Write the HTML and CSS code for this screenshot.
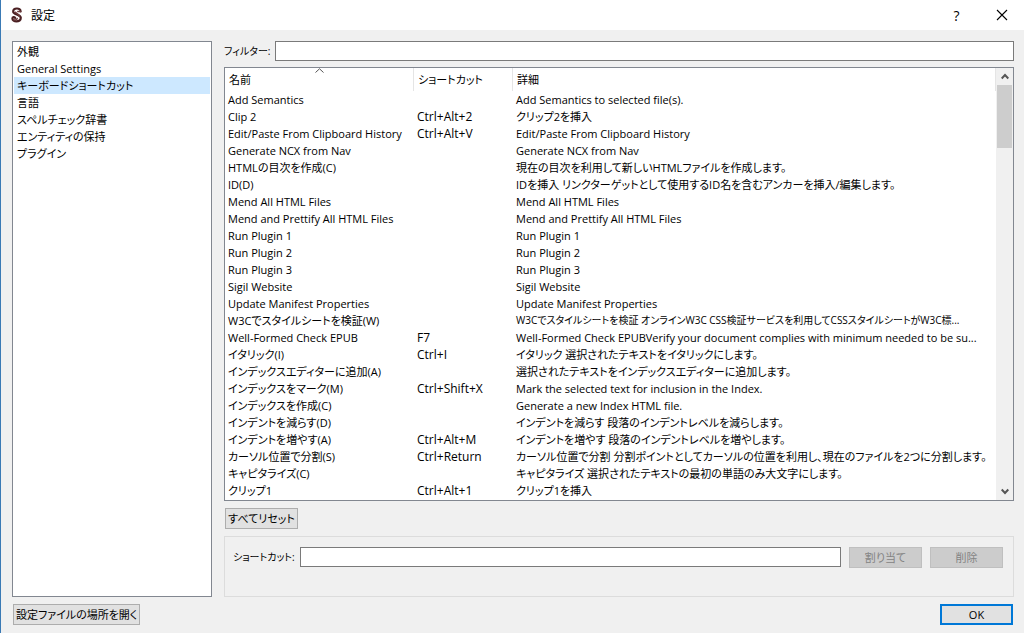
FILE: index.html
```html
<!DOCTYPE html>
<html lang="ja">
<head>
<meta charset="utf-8">
<title>設定</title>
<link rel="stylesheet" href="styles.css">
</head>
<body>
<div class="dialog">
  <header class="titlebar">
    <svg class="logo" width="12" height="16" viewBox="0 0 12 16" fill="none" stroke-linecap="round" aria-hidden="true">
      <path d="M9.6 4.4C9.6 2.2 7.8 1.4 5.8 1.5 3.4 1.6 2 2.8 2.2 4.8 2.5 7.6 9.6 7.2 9.8 10.8 9.9 13.2 7.8 14.4 5.4 14.4 3.2 14.4 1.4 13.4 1.4 11.6 1.4 10 3.6 9.6 4.2 11" stroke="#4a1f22" stroke-width="2.2"/>
      <path d="M4.4 5.2C5.6 6.8 8 7.2 8.4 9.4M6.8 4.4 9.6 4.6M2.6 12.6C4 13.4 6 13 6.2 11.4" stroke="#6d3a3c" stroke-width="1.5"/>
    </svg>
    <h1 class="title">設定</h1>
    <button class="winbtn" type="button" aria-label="ヘルプ">?</button>
    <button class="winbtn" type="button" aria-label="閉じる">
      <svg width="12" height="12" viewBox="0 0 12 12" fill="none" stroke="#000" stroke-width="1.1"><path d="M1 1 11 11M11 1 1 11"/></svg>
    </button>
  </header>
  <main class="content">
    <nav class="sidebar">
      <button class="item" type="button">外観</button>
      <button class="item" type="button">General Settings</button>
      <button class="item selected" type="button" aria-current="page">キーボードショートカット</button>
      <button class="item" type="button">言語</button>
      <button class="item" type="button">スペルチェック辞書</button>
      <button class="item" type="button">エンティティの保持</button>
      <button class="item" type="button">プラグイン</button>
    </nav>
    <section class="panel">
      <div class="filter">
        <label for="filter">フィルター:</label>
        <input class="textbox" id="filter" type="text">
      </div>
      <div class="list">
        <table class="shortcuts">
          <colgroup><col class="col-name"><col class="col-key"><col></colgroup>
          <thead>
            <tr>
              <th>名前<svg class="sort" width="9" height="5" viewBox="0 0 9 5" fill="none" stroke="#555"><path d="M.5 4.5 4.5.8 8.5 4.5"/></svg></th>
              <th>ショートカット</th>
              <th>詳細</th>
            </tr>
          </thead>
          <tbody>
            <tr><td>Add Semantics</td><td></td><td>Add Semantics to selected file(s).</td></tr>
            <tr><td>Clip 2</td><td>Ctrl+Alt+2</td><td>クリップ2を挿入</td></tr>
            <tr><td>Edit/Paste From Clipboard History</td><td>Ctrl+Alt+V</td><td>Edit/Paste From Clipboard History</td></tr>
            <tr><td>Generate NCX from Nav</td><td></td><td>Generate NCX from Nav</td></tr>
            <tr><td>HTMLの目次を作成(C)</td><td></td><td>現在の目次を利用して新しいHTMLファイルを作成します。</td></tr>
            <tr><td>ID(D)</td><td></td><td>IDを挿入 リンクターゲットとして使用するID名を含むアンカーを挿入/編集します。</td></tr>
            <tr><td>Mend All HTML Files</td><td></td><td>Mend All HTML Files</td></tr>
            <tr><td>Mend and Prettify All HTML Files</td><td></td><td>Mend and Prettify All HTML Files</td></tr>
            <tr><td>Run Plugin 1</td><td></td><td>Run Plugin 1</td></tr>
            <tr><td>Run Plugin 2</td><td></td><td>Run Plugin 2</td></tr>
            <tr><td>Run Plugin 3</td><td></td><td>Run Plugin 3</td></tr>
            <tr><td>Sigil Website</td><td></td><td>Sigil Website</td></tr>
            <tr><td>Update Manifest Properties</td><td></td><td>Update Manifest Properties</td></tr>
            <tr><td>W3Cでスタイルシートを検証(W)</td><td></td><td class="long">W3Cでスタイルシートを検証 オンラインW3C CSS検証サービスを利用してCSSスタイルシートがW3C標...</td></tr>
            <tr><td>Well-Formed Check EPUB</td><td>F7</td><td>Well-Formed Check EPUBVerify your document complies with minimum needed to be su...</td></tr>
            <tr><td>イタリック(I)</td><td>Ctrl+I</td><td>イタリック 選択されたテキストをイタリックにします。</td></tr>
            <tr><td>インデックスエディターに追加(A)</td><td></td><td>選択されたテキストをインデックスエディターに追加します。</td></tr>
            <tr><td>インデックスをマーク(M)</td><td>Ctrl+Shift+X</td><td>Mark the selected text for inclusion in the Index.</td></tr>
            <tr><td>インデックスを作成(C)</td><td></td><td>Generate a new Index HTML file.</td></tr>
            <tr><td>インデントを減らす(D)</td><td></td><td>インデントを減らす 段落のインデントレベルを減らします。</td></tr>
            <tr><td>インデントを増やす(A)</td><td>Ctrl+Alt+M</td><td>インデントを増やす 段落のインデントレベルを増やします。</td></tr>
            <tr><td>カーソル位置で分割(S)</td><td>Ctrl+Return</td><td>カーソル位置で分割 分割ポイントとしてカーソルの位置を利用し、現在のファイルを2つに分割します。</td></tr>
            <tr><td>キャピタライズ(C)</td><td></td><td>キャピタライズ 選択されたテキストの最初の単語のみ大文字にします。</td></tr>
            <tr><td>クリップ1</td><td>Ctrl+Alt+1</td><td>クリップ1を挿入</td></tr>
          </tbody>
        </table>
        <div class="scrollbar">
          <button class="arrow" type="button" aria-label="上へ"><svg width="8" height="7" viewBox="0 0 8 7" fill="none" stroke="#555" stroke-width="2"><path d="M.7 5.5 4 2 7.3 5.5"/></svg></button>
          <div class="thumb"></div>
          <button class="arrow" type="button" aria-label="下へ"><svg width="8" height="7" viewBox="0 0 8 7" fill="none" stroke="#555" stroke-width="2"><path d="M.7 1.5 4 5 7.3 1.5"/></svg></button>
        </div>
      </div>
      <button class="btn reset" type="button">すべてリセット</button>
      <div class="group">
        <label for="shortcut">ショートカット:</label>
        <input class="textbox" id="shortcut" type="text">
        <button class="btn" type="button" disabled>割り当て</button>
        <button class="btn" type="button" disabled>削除</button>
      </div>
    </section>
  </main>
  <footer class="footer">
    <button class="btn" type="button">設定ファイルの場所を開く</button>
    <button class="btn primary" type="button">OK</button>
  </footer>
</div>
</body>
</html>
```
FILE: styles.css
```css
* { box-sizing: border-box; }

body {
  margin: 0;
  color: #000;
  background: #f0f0f0;
  font: 11px/17px "Open Sans", "Noto Sans CJK JP", sans-serif;
  font-feature-settings: "palt";
}

button, input {
  margin: 0;
  padding: 0;
  font: inherit;
  font-feature-settings: inherit;
  color: inherit;
  border: 0;
  border-radius: 0;
}

.dialog {
  display: flex;
  flex-direction: column;
  min-height: 100vh;
  border-left: 1px solid #3a7ab5;
}

.titlebar {
  display: flex;
  align-items: center;
  height: 30px;
  padding-left: 10px;
  background: #fff;
}
.title {
  flex: 1;
  margin: 0 0 0 8px;
  font-size: 12px;
  font-weight: 400;
}
.winbtn {
  display: flex;
  align-items: center;
  justify-content: center;
  width: 45px;
  height: 28px;
  background: none;
  font-size: 14px;
}

.content {
  display: flex;
  flex: 1;
  gap: 12px;
  padding: 11px 10px 0 11px;
}

.sidebar {
  width: 200px;
  padding: 1px;
  background: #fff;
  border: 1px solid #828790;
}
.item {
  display: block;
  width: 100%;
  height: 17px;
  padding-left: 3px;
  background: none;
  text-align: left;
  white-space: nowrap;
}
.item.selected { background: #cde8ff; }

.panel {
  display: flex;
  flex: 1;
  flex-direction: column;
  min-width: 0;
}
.filter {
  display: flex;
  align-items: center;
  height: 20px;
}
label {
  font-size: 10px;
  line-height: 20px;
  white-space: nowrap;
}
.filter label { width: 51px; }
.textbox {
  flex: 1;
  min-width: 0;
  height: 20px;
  padding: 0 3px;
  background: #fff;
  border: 1px solid #7a7a7a;
}

.list {
  display: flex;
  margin-top: 6px;
  background: #fff;
  border: 1px solid #828790;
}
.shortcuts {
  flex: 1;
  min-width: 0;
  width: 100%;
  margin-bottom: 1px;
  table-layout: fixed;
  border-collapse: separate;
  border-spacing: 0;
}
.col-name { width: 189px; }
.col-key { width: 99px; }
.shortcuts th {
  position: relative;
  height: 23px;
  padding: 0 4px;
  border-right: 1px solid #e5e5e5;
  font-weight: 400;
  text-align: left;
}
.shortcuts td {
  height: 17px;
  padding: 0 3px;
  overflow: hidden;
  white-space: nowrap;
}
.shortcuts td:nth-child(2) { font-size: 12px; }
.shortcuts .long { font-size: 10px; }
.sort {
  position: absolute;
  top: 0;
  right: 0;
  left: 0;
  margin: 0 auto;
}
.scrollbar {
  display: flex;
  flex-direction: column;
  width: 17px;
  background: #f0f0f0;
}
.arrow {
  display: flex;
  align-items: center;
  justify-content: center;
  height: 17px;
  background: none;
}
.thumb {
  height: 63px;
  margin: 0 1px auto;
  background: #cdcdcd;
}

.btn {
  min-width: 73px;
  height: 21px;
  padding: 0 2px;
  background: #e1e1e1;
  border: 1px solid #adadad;
  line-height: 17px;
  white-space: nowrap;
}
.btn:disabled {
  color: #838383;
  background: #ccc;
  border-color: #bfbfbf;
}
.btn.primary { border: 2px solid #0078d7; }
.reset {
  align-self: flex-start;
  margin: 7px 0 7px 1px;
}

.group {
  display: flex;
  flex: 1;
  align-items: flex-start;
  gap: 8px;
  min-height: 60px;
  padding: 10px 10px 10px 8px;
  border: 1px solid #dcdcdc;
}
.group label { width: 59px; }

.footer {
  display: flex;
  justify-content: space-between;
  padding: 7px 11px 8px 12px;
}
```
